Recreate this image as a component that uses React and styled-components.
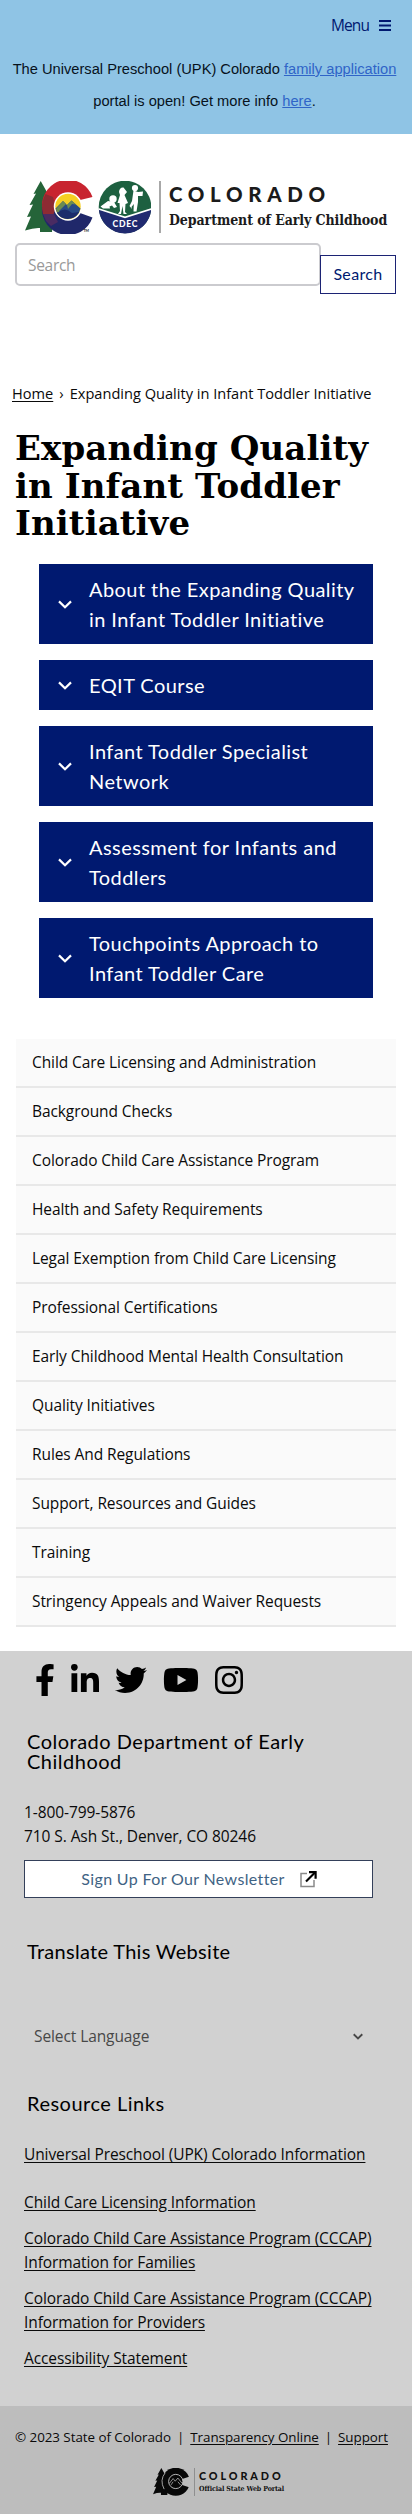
import React from "react";
import styled, { createGlobalStyle } from "styled-components";
import { FaFacebookF, FaLinkedinIn, FaTwitter, FaYoutube, FaInstagram } from "react-icons/fa";

const body = `"Open Sans", "Noto Sans", sans-serif`;
const display = `Lato, "Open Sans", sans-serif`;
const slab = `"DejaVu Serif", serif`;

const GlobalStyle = createGlobalStyle`
  *, *::before, *::after { box-sizing: border-box; }
  body { margin: 0; background: #fff; color: #0a0a0a; font: 15.5px/24px ${body}; letter-spacing: -0.09px; }
  h1, h2, p, ul { margin: 0; padding: 0; }
  ul { list-style: none; }
  svg { display: block; flex: none; }
`;

const Page = styled.div`
  width: 412px;
  height: 2514px;
  display: flex;
  flex-direction: column;
`;

const Banner = styled.div`
  height: 134px;
  background: #8fc4e5;
`;

const MenuButton = styled.button`
  display: flex;
  align-items: center;
  justify-content: flex-end;
  gap: 10px;
  width: 100%;
  height: 53px;
  padding: 0 21px 3px 0;
  border: 0;
  background: none;
  color: #001970;
  font: 15.5px/24px ${body};
`;

const MenuLabel = styled.span`
  letter-spacing: -0.9px;
`;

const Alert = styled.p`
  padding-right: 3px;
  font: 14.67px/32px "Liberation Sans", Arial, sans-serif;
  letter-spacing: 0;
  text-align: center;
  color: #07121c;
  white-space: nowrap;
`;

const AlertLink = styled.a`
  color: #2f64c8;
  text-decoration: underline;
`;

const Brand = styled.div`
  display: flex;
  height: 109px;
  padding: 47px 0 10px 25px;
`;

const BrandText = styled.div`
  display: flex;
  flex-direction: column;
  gap: 4px;
  height: 52px;
  margin-left: 8px;
  padding: 1px 0 0 8px;
  border-left: 2px solid #a8a8a8;
  white-space: nowrap;
  color: #1b1b1b;
`;

const BrandName = styled.span`
  font: 900 20.5px/24px ${display};
  letter-spacing: 5.65px;
`;

const BrandDept = styled.span`
  font: bold 14px/20px ${slab};
  font-stretch: condensed;
  letter-spacing: -0.08px;
`;

const SearchForm = styled.form`
  display: flex;
  align-items: flex-start;
  height: 138px;
  padding: 0 16px 0 15px;
`;

const SearchInput = styled.input`
  width: 306px;
  height: 43px;
  padding: 0 0 0 11px;
  border: 2px solid #cbcbcf;
  border-radius: 5px;
  font: 15.5px/24px ${body};
  letter-spacing: -0.3px;
  outline: 0;
  &::placeholder { color: #999; opacity: 1; }
`;

const SearchButton = styled.button`
  width: 76px;
  height: 39px;
  margin: 12px 0 0 -1px;
  padding: 0 0 2px;
  border: 1px solid #1c2374;
  background: #fff;
  color: #001970;
  font: 16px/24px ${display};
  letter-spacing: 0.35px;
`;

const Breadcrumb = styled.nav`
  display: flex;
  height: 49px;
  padding-left: 12px;
  font-size: 14.6px;
  letter-spacing: 0;
  white-space: nowrap;
`;

const Crumb = styled.a`
  color: inherit;
  text-decoration: underline;
  text-underline-offset: 2px;
`;

const Separator = styled.span`
  margin: 0 6px;
`;

const Title = styled.h1`
  height: 134px;
  padding-left: 15px;
  font: bold 34px/37.5px ${slab};
  letter-spacing: 0.1px;
  color: #000;
`;

const Accordion = styled.div`
  display: flex;
  flex-direction: column;
  gap: 16px;
  padding: 0 39px 41px;
`;

const AccordionItem = styled.button`
  display: flex;
  align-items: center;
  gap: 17px;
  padding: 10px 0 10px 19px;
  border: 0;
  background: #001970;
  color: #fff;
  font: 20px/30px ${display};
  letter-spacing: 0.43px;
  text-align: left;
`;

const ItemLabel = styled.span`
  white-space: pre-line;
`;

const SideNav = styled.ul`
  margin: 0 16px;
  height: 612px;
`;

const SideItem = styled.li`
  height: 49px;
  padding: 11px 16px;
  background: #fafafa;
  border-bottom: 2px solid #e8e8e8;
  white-space: nowrap;
`;

const Footer = styled.footer`
  flex: 1;
  padding: 13px 24px 0 24px;
  background: #d1d1d1;
`;

const Socials = styled.div`
  display: flex;
  gap: 16px;
  height: 67px;
  padding-left: 11px;
  color: #000;
`;

const socialIcon = (Icon, width) => styled(Icon)`
  width: ${width}px;
  height: 32px;
`;
const Facebook = socialIcon(FaFacebookF, 20);
const LinkedIn = socialIcon(FaLinkedinIn, 28);
const Twitter = socialIcon(FaTwitter, 32);
const YouTube = socialIcon(FaYoutube, 36);
const Instagram = socialIcon(FaInstagram, 28);

const FooterHeading = styled.h2`
  padding-left: 3px;
  margin-bottom: ${(p) => p.$after}px;
  font: 20px/20px ${display};
  letter-spacing: ${(p) => p.$tracking || 0.5}px;
  color: #000;
`;

const ContactLine = styled.p`
  letter-spacing: -0.08px;
`;

const Newsletter = styled.a`
  display: flex;
  align-items: center;
  justify-content: center;
  gap: 15px;
  width: 349px;
  height: 38px;
  margin: 12px 0 43px;
  padding-left: 1px;
  border: 1px solid #34405a;
  background: #fff;
  color: #3f6384;
  font: 16px/24px ${display};
  letter-spacing: 0.35px;
`;

const LanguageSelect = styled.div`
  display: flex;
  align-items: center;
  justify-content: space-between;
  width: 349px;
  height: 40px;
  margin-bottom: 37px;
  padding: 0 10px;
  color: #484848;
`;

const LinkList = styled.ul`
  display: flex;
  flex-direction: column;
  gap: 12px;
  white-space: pre-line;
  letter-spacing: -0.1px;
`;

const LinkItem = styled.li`
  margin-bottom: ${(p) => (p.$spaced ? 12 : 0)}px;
`;

const FooterLink = styled.a`
  color: inherit;
  text-decoration: underline;
  text-underline-offset: 1.5px;
`;

const BottomBar = styled.div`
  height: 108px;
  padding-top: 19px;
  background: #bdbdbd;
`;

const Legal = styled.div`
  display: flex;
  justify-content: space-between;
  height: 43px;
  padding: 0 24px 0 15px;
  font-size: 13.4px;
  letter-spacing: -0.05px;
  white-space: nowrap;
`;

const PortalLogo = styled.div`
  display: flex;
  padding-left: 153px;
`;

const PortalText = styled.div`
  display: flex;
  flex-direction: column;
  height: 28px;
  margin-left: 5px;
  padding: 2px 0 0 4px;
  border-left: 1px solid #8f8f8f;
  white-space: nowrap;
  color: #111;
`;

const PortalName = styled.span`
  font: 900 10.8px/12px ${display};
  letter-spacing: 2.9px;
`;

const PortalTag = styled.span`
  font: bold 7px/14px ${slab};
  font-stretch: condensed;
`;

const treePath =
  "M40.7 181 L33.5 194 L36 193.5 L29.5 205 L33 204.5 L27 217 L31 216.5 L25 230.5 Q34 227.5 40 228 L40 232 L52 232 L56 194 L48 194 Z";

function StateMark() {
  return (
    <svg width="126" height="53" viewBox="25 181 126 53">
      <path d={treePath} fill="#256439" />
      <path d="M92.5 197 A26 26 0 0 0 42 207 L56 207 A13 13 0 0 1 80 200 Z" fill="#c8242f" />
      <path d="M42 207 A26 26 0 0 0 92.5 217.5 L80 213 A13 13 0 0 1 56 207 Z" fill="#20286a" />
      <path d="M45.5 194 L53 197 L56 207 L52 219 L43 214 Q40 204 45.5 194 Z" fill="#8e2b33" />
      <path d="M43 214 L54 214 L58 222 L51 226 L46 221 Z" fill="#4a2b62" />
      <circle cx="68" cy="206.5" r="14.2" fill="#fff" />
      <circle cx="68" cy="206.5" r="12.7" fill="#f5cf22" />
      <path d="M55.5 208.5 L63 201 L67 205 L71.5 200.5 L80.5 208.5 A12.7 12.7 0 0 1 55.5 208.5 Z" fill="#284b84" />
      <path d="M56 209 L63 201 L66 204 L59 211 L61 215 Q57 213 56 209 Z M67 205 L71.5 200.5 L76 204.5 L72 204 L68 209 Z" fill="#6b8c50" />
      <path d="M57 213 Q65 206 72 213 L79 212 A12.7 12.7 0 0 1 57 213 Z" fill="#1c2d6b" />
      <text x="83.5" y="232" fontSize="3.6" fontFamily="Lato, sans-serif" fontWeight="700" fill="#222">TM</text>

      <circle cx="125" cy="207" r="26.3" fill="#1d6040" />
      <path d="M98.8 209.5 L125 217.5 L151.2 209.5 A26.3 26.3 0 0 1 98.8 209.5 Z" fill="#202a70" />
      <path d="M98.8 209 L125 217.3 L151.2 209" fill="none" stroke="#fff" strokeWidth="1.6" />
      <g fill="#fff">
        <circle cx="113" cy="199" r="3.7" />
        <path d="M100.5 206.5 L108 201 L114 202 L117 207 L114 208 L112 205.5 L109.5 206.5 L110 208.5 L103 208.5 Z" />
        <path d="M119 192 Q119.5 187 123.5 187.5 L127 192 L124.5 195 L128 203 L125.5 204 L125 212 L127 214 H123.5 L122.5 206 L121 214 H118 L120 211 L119.5 203 L117.5 203 L120 195 Z" />
        <circle cx="135" cy="188" r="3.1" />
        <path d="M133.5 190.5 L138 192 L143 191.5 L142.5 196 L138 196 L138 202 L136.5 211.5 H133.5 L133.8 204 L131.5 207 L132 209 L129.5 206 L132 201 Z" />
      </g>
      <text x="125.4" y="227.3" textAnchor="middle" fontSize="8.6" letterSpacing="0.8" fontFamily="Lato, sans-serif" fontWeight="900" fill="#fff">CDEC</text>
    </svg>
  );
}

function PortalMark() {
  return (
    <svg width="36" height="28" viewBox="25 181 68 53">
      <path d={treePath} fill="#080808" />
      <circle cx="68" cy="207" r="26.5" fill="#080808" />
      <path d="M48 190 Q37 204 46 221" fill="none" stroke="#bdbdbd" strokeWidth="1.6" />
      <path d="M80 202 L95 197 V218 L80 213 Z" fill="#bdbdbd" />
      <circle cx="68" cy="206.5" r="13.5" fill="#080808" stroke="#bdbdbd" strokeWidth="1.8" />
      <path d="M56 210 L63 201 L67 206 L72 200 L80 210 M59 213 L63 207 M72 207 L77 213" fill="none" stroke="#bdbdbd" strokeWidth="1.4" />
    </svg>
  );
}

function Chevron({ width, height, stroke }) {
  return (
    <svg width={width} height={height} viewBox="0 0 14 9" fill="none" stroke="currentColor" strokeWidth={stroke}>
      <path d="M1 1.4 L7 7.2 L13 1.4" />
    </svg>
  );
}

function MenuIcon() {
  return (
    <svg width="12" height="11" viewBox="0 0 12 11" fill="currentColor">
      <path d="M0 0H12V2H0Z M0 4.5H12V6.5H0Z M0 9H12V11H0Z" />
    </svg>
  );
}

function ExternalIcon() {
  return (
    <svg width="17" height="17" viewBox="0 0 17 17" fill="none">
      <path d="M7 2.5 H1 V15.5 H14 V9" stroke="#8a8a8a" strokeWidth="1.5" />
      <path d="M6 10.5 L15 1.5" stroke="#000" strokeWidth="2.2" />
      <path d="M9 1.1 H15.6 V7.8" stroke="#000" strokeWidth="2.2" />
    </svg>
  );
}

const topics = [
  "About the Expanding Quality\nin Infant Toddler Initiative",
  "EQIT Course",
  "Infant Toddler Specialist\nNetwork",
  "Assessment for Infants and\nToddlers",
  "Touchpoints Approach to\nInfant Toddler Care",
];

const sections = [
  "Child Care Licensing and Administration",
  "Background Checks",
  "Colorado Child Care Assistance Program",
  "Health and Safety Requirements",
  "Legal Exemption from Child Care Licensing",
  "Professional Certifications",
  "Early Childhood Mental Health Consultation",
  "Quality Initiatives",
  "Rules And Regulations",
  "Support, Resources and Guides",
  "Training",
  "Stringency Appeals and Waiver Requests",
];

const resources = [
  "Universal Preschool (UPK) Colorado Information",
  "Child Care Licensing Information",
  "Colorado Child Care Assistance Program (CCCAP)\nInformation for Families",
  "Colorado Child Care Assistance Program (CCCAP)\nInformation for Providers",
  "Accessibility Statement",
];

export default function App() {
  return (
    <Page>
      <GlobalStyle />
      <Banner>
        <MenuButton>
          <MenuLabel>Menu</MenuLabel>
          <MenuIcon />
        </MenuButton>
        <Alert>
          The Universal Preschool (UPK) Colorado <AlertLink>family application</AlertLink>
          <br />
          portal is open! Get more info <AlertLink>here</AlertLink>.
        </Alert>
      </Banner>

      <Brand>
        <StateMark />
        <BrandText>
          <BrandName>COLORADO</BrandName>
          <BrandDept>Department of Early Childhood</BrandDept>
        </BrandText>
      </Brand>

      <SearchForm>
        <SearchInput placeholder="Search" />
        <SearchButton type="button">Search</SearchButton>
      </SearchForm>

      <Breadcrumb>
        <Crumb>Home</Crumb>
        <Separator>›</Separator>
        <span>Expanding Quality in Infant Toddler Initiative</span>
      </Breadcrumb>

      <Title>
        Expanding Quality
        <br />
        in Infant Toddler
        <br />
        Initiative
      </Title>

      <Accordion>
        {topics.map((t) => (
          <AccordionItem key={t}>
            <Chevron width={14} height={9} stroke={2.2} />
            <ItemLabel>{t}</ItemLabel>
          </AccordionItem>
        ))}
      </Accordion>

      <SideNav>
        {sections.map((s) => (
          <SideItem key={s}>{s}</SideItem>
        ))}
      </SideNav>

      <Footer>
        <Socials>
          <Facebook />
          <LinkedIn />
          <Twitter />
          <YouTube />
          <Instagram />
        </Socials>
        <FooterHeading $after={29}>
          Colorado Department of Early
          <br />
          Childhood
        </FooterHeading>
        <ContactLine>1-800-799-5876</ContactLine>
        <ContactLine>710 S. Ash St., Denver, CO 80246</ContactLine>
        <Newsletter>
          Sign Up For Our Newsletter
          <ExternalIcon />
        </Newsletter>
        <FooterHeading $after={55} $tracking={0.3}>Translate This Website</FooterHeading>
        <LanguageSelect>
          Select Language
          <Chevron width={10} height={7} stroke={2.6} />
        </LanguageSelect>
        <FooterHeading $after={29}>Resource Links</FooterHeading>
        <LinkList>
          {resources.map((r, i) => (
            <LinkItem key={r} $spaced={i === 0}>
              <FooterLink>{r}</FooterLink>
            </LinkItem>
          ))}
        </LinkList>
      </Footer>

      <BottomBar>
        <Legal>
          <span>© 2023 State of Colorado</span>
          <span>|</span>
          <FooterLink>Transparency Online</FooterLink>
          <span>|</span>
          <FooterLink>Support</FooterLink>
        </Legal>
        <PortalLogo>
          <PortalMark />
          <PortalText>
            <PortalName>COLORADO</PortalName>
            <PortalTag>Official State Web Portal</PortalTag>
          </PortalText>
        </PortalLogo>
      </BottomBar>
    </Page>
  );
}
